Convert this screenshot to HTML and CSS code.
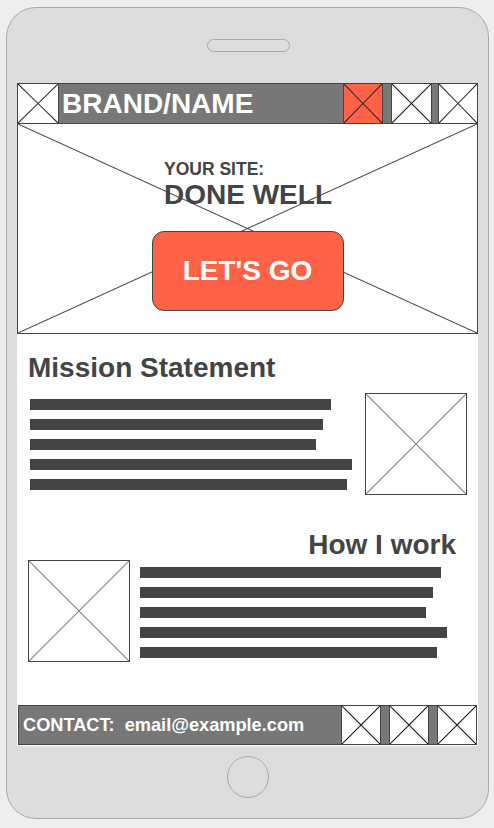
FILE: index.html
```html
<!DOCTYPE html>
<html>
<head>
    <title>Mobile Wireframe</title>
    <link rel="stylesheet" href="styles.css">
</head>
<body>
    <div class="phone">
        <div class="speaker"></div>

        <div class="screen">
            <header class="topbar">
                <div class="ph ph-dark logo"></div>
                <div class="brand">BRAND/NAME</div>
                <div class="ph ph-dark nav nav-active"></div>
                <div class="ph ph-dark nav"></div>
                <div class="ph ph-dark nav nav-last"></div>
            </header>

            <section class="hero">
                <div class="hero-text">
                    <div class="kicker">YOUR SITE:</div>
                    <div class="headline">DONE WELL</div>
                </div>
                <a class="cta">LET'S GO</a>
            </section>

            <section class="block">
                <h2 class="block-title">Mission Statement</h2>
                <div class="block-row">
                    <div class="lines">
                        <span class="line" style="width: 301px"></span>
                        <span class="line" style="width: 293px"></span>
                        <span class="line" style="width: 286px"></span>
                        <span class="line" style="width: 322px"></span>
                        <span class="line" style="width: 317px"></span>
                    </div>
                    <div class="ph pic"></div>
                </div>
            </section>

            <section class="block block-right">
                <h2 class="block-title">How I work</h2>
                <div class="block-row">
                    <div class="ph pic"></div>
                    <div class="lines">
                        <span class="line" style="width: 301px"></span>
                        <span class="line" style="width: 293px"></span>
                        <span class="line" style="width: 286px"></span>
                        <span class="line" style="width: 307px"></span>
                        <span class="line" style="width: 297px"></span>
                    </div>
                </div>
            </section>

            <footer class="contact">
                <div class="contact-text">CONTACT:  email@example.com</div>
                <div class="ph ph-dark social"></div>
                <div class="ph ph-dark social"></div>
                <div class="ph ph-dark social social-last"></div>
            </footer>
        </div>

        <div class="home"></div>
    </div>
</body>
</html>
```

FILE: styles.css
```css
* {
    box-sizing: border-box;
}

body {
    margin: 0;
    background: #eeeeee;
    font-family: "Liberation Sans", Arial, sans-serif;
    font-weight: bold;
}

/* device frame */

.phone {
    display: flex;
    flex-direction: column;
    width: 483px;
    height: 812px;
    margin: 7px 0 0 6px;
    padding: 0 10px;
    background: #dddddd;
    border: 1px solid #aaaaaa;
    border-radius: 30px;
}

.speaker {
    align-self: center;
    width: 83px;
    height: 13px;
    margin: 31px 0 0 1px;
    border: 1px solid #aaaaaa;
    border-radius: 7px;
}

.home {
    align-self: center;
    width: 42px;
    height: 42px;
    margin-top: 10px;
    border: 1px solid #aaaaaa;
    border-radius: 50%;
}

.screen {
    display: flex;
    flex-direction: column;
    height: 663px;
    margin-top: 31px;
    background: #ffffff;
}

/* image placeholders: box with an X through it */

.ph {
    background-color: #ffffff;
    background-image:
        linear-gradient(to top right, transparent calc(50% - 1px), #888888 50%, transparent calc(50% + 1px)),
        linear-gradient(to bottom right, transparent calc(50% - 1px), #888888 50%, transparent calc(50% + 1px));
}

.ph-dark {
    background-image:
        linear-gradient(to top right, transparent calc(50% - 1px), #222222 50%, transparent calc(50% + 1px)),
        linear-gradient(to bottom right, transparent calc(50% - 1px), #222222 50%, transparent calc(50% + 1px));
}

/* top bar */

.topbar {
    display: flex;
    height: 41px;
    background: #777777;
    border: 1px solid #444444;
}

.logo {
    width: 41px;
    border-right: 1px solid #444444;
}

.brand {
    flex: 1;
    padding-left: 3px;
    color: #ffffff;
    font-size: 28px;
    line-height: 39px;
}

.nav {
    width: 41px;
    margin-right: 6px;
    border-left: 1px solid #444444;
    border-right: 1px solid #444444;
}

.nav-active {
    width: 40px;
    margin-right: 8px;
    background-color: #ff6347;
}

.nav-last {
    width: 39px;
    margin-right: 0;
    border-right: none;
}

/* hero */

.hero {
    display: flex;
    flex-direction: column;
    height: 210px;
    padding-top: 37px;
    border: 1px solid #444444;
    border-top: none;
    background-image:
        linear-gradient(to top right, transparent calc(50% - 1px), #444444 50%, transparent calc(50% + 1px)),
        linear-gradient(to bottom right, transparent calc(50% - 1px), #444444 50%, transparent calc(50% + 1px));
}

.hero-text {
    padding-left: 146px;
    color: #444444;
}

.kicker {
    font-size: 17.5px;
    line-height: 17px;
}

.headline {
    margin-top: 3px;
    font-size: 28px;
    line-height: 28px;
}

.cta {
    display: flex;
    align-items: center;
    justify-content: center;
    align-self: center;
    width: 192px;
    height: 80px;
    margin-top: 22px;
    background: #ff6347;
    border: 1px solid #444444;
    border-radius: 12px;
    color: #ffffff;
    font-size: 28px;
}

/* content blocks */

.block {
    padding: 20px 11px 0 11px;
}

.block + .block {
    padding-top: 36px;
}

.block-title {
    margin: 0;
    color: #444444;
    font-size: 28px;
    line-height: 28px;
}

.block-right .block-title {
    text-align: right;
    padding-right: 11px;
}

.block-row {
    display: flex;
    justify-content: space-between;
    margin-top: 11px;
    padding-left: 2px;
}

.block-right .block-row {
    justify-content: flex-start;
    gap: 10px;
    margin-top: 1px;
    padding-left: 0;
}

.lines {
    display: flex;
    flex-direction: column;
    gap: 9px;
    padding-top: 6px;
}

.block-right .lines {
    padding-top: 7px;
}

.line {
    display: block;
    height: 11px;
    background: #444444;
}

.pic {
    width: 102px;
    height: 102px;
    border: 1px solid #444444;
}

/* footer */

.contact {
    display: flex;
    height: 40px;
    margin: auto 1px 1px;
    background: #777777;
    border: 1px solid #444444;
}

.contact-text {
    flex: 1;
    padding-left: 4px;
    color: #ffffff;
    font-size: 18.2px;
    line-height: 38px;
    white-space: pre;
}

.social {
    width: 40px;
    margin-left: 8px;
    border-left: 1px solid #444444;
    border-right: 1px solid #444444;
}

.social:first-of-type {
    width: 39px;
}

.social-last {
    width: 39px;
    border-right: none;
}
```
